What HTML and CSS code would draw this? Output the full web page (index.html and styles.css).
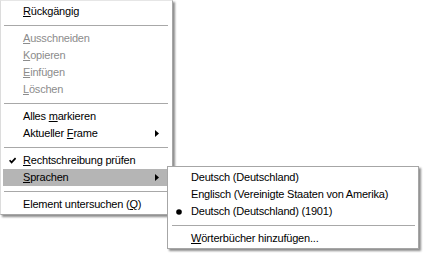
FILE: index.html
```html
<!DOCTYPE html>
<html lang="de">
<head>
<meta charset="utf-8">
<title>Kontextmenü</title>
<link rel="stylesheet" href="styles.css">
</head>
<body>
<div class="menu main">
  <div class="item"><span><u>R</u>ückgängig</span></div>
  <div class="sep"></div>
  <div class="item disabled"><span><u>A</u>usschneiden</span></div>
  <div class="item disabled"><span><u>K</u>opieren</span></div>
  <div class="item disabled"><span><u>E</u>infügen</span></div>
  <div class="item disabled"><span><u>L</u>öschen</span></div>
  <div class="sep"></div>
  <div class="item"><span>Alles <u>m</u>arkieren</span></div>
  <div class="item has-sub"><span>Aktueller <u>F</u>rame</span>
    <svg class="arrow" width="4" height="7" viewBox="0 0 4 7"><polygon points="0,0 4,3.5 0,7"/></svg>
  </div>
  <div class="sep"></div>
  <div class="item">
    <svg class="mark check" width="7" height="7" viewBox="0 0 7 7"><path d="M0.6 3.2 L2.6 5.4 L6.6 1.2"/></svg>
    <span><u>R</u>echtschreibung prüfen</span></div>
  <div class="item has-sub active"><span><u>S</u>prachen</span>
    <svg class="arrow" width="4" height="7" viewBox="0 0 4 7"><polygon points="0,0 4,3.5 0,7"/></svg>
    <div class="menu sub">
      <div class="item"><span>Deutsch (Deutschland)</span></div>
      <div class="item"><span>Englisch (Vereinigte Staaten von Amerika)</span></div>
      <div class="item">
        <svg class="mark bullet" width="6" height="6" viewBox="0 0 6 6"><circle cx="3" cy="3" r="2.8"/></svg>
        <span>Deutsch (Deutschland) (1901)</span></div>
      <div class="sep"></div>
      <div class="item"><span><u>W</u>örterbücher hinzufügen...</span></div>
    </div>
  </div>
  <div class="sep"></div>
  <div class="item"><span>Element untersuchen (<u>Q</u>)</span></div>
</div>
</body>
</html>
```

FILE: styles.css
```css
html, body {
  margin: 0;
  padding: 0;
  background: #ffffff;
}

body {
  min-height: 258px;
  font-family: "Liberation Sans", Arial, sans-serif;
  font-size: 11px;
  letter-spacing: -0.2px;
  color: #000000;
}

.menu {
  background: #ffffff;
  box-sizing: border-box;
  box-shadow: 2px 2px 2px rgba(0, 0, 0, 0.45);
  display: flex;
  flex-direction: column;
}

.main {
  width: 173px;
  border: 1px solid #a6a6a6;
  border-left-color: #dcdcdc;
  border-top-color: #e6e6e6;
  padding: 2px 3px 1px 2px;
}

.item {
  position: relative;
  height: 17px;
  line-height: 17px;
  padding-left: 20px;
  white-space: nowrap;
  display: flex;
  align-items: center;
}

.item span {
  line-height: 17px;
}

.item u {
  text-decoration: underline;
  text-underline-offset: 1px;
}

.disabled {
  color: #8c8c8c;
}

.active {
  background: #b5b5b5;
}

.sep {
  height: 10px;
  display: flex;
  align-items: center;
  margin: 0 1px;
}

.sep::before {
  content: "";
  flex: 1;
  height: 1px;
  background: #a8a8a8;
}

.arrow {
  position: absolute;
  right: 10px;
  top: 5px;
  fill: #000000;
}

.mark {
  position: absolute;
}

.check {
  left: 6px;
  top: 5px;
  fill: none;
  stroke: #000000;
  stroke-width: 1.7;
}

.bullet {
  left: 6px;
  top: 6px;
  fill: #000000;
}

.sub {
  position: absolute;
  left: 164px;
  top: -3px;
  width: 252px;
  border: 1px solid #a6a6a6;
  padding: 2px 2px 1px 2px;
  z-index: 2;
}

.sub .item {
  padding-left: 21px;
}

.sub .sep {
  margin: 0 1px 0 2px;
}
```
